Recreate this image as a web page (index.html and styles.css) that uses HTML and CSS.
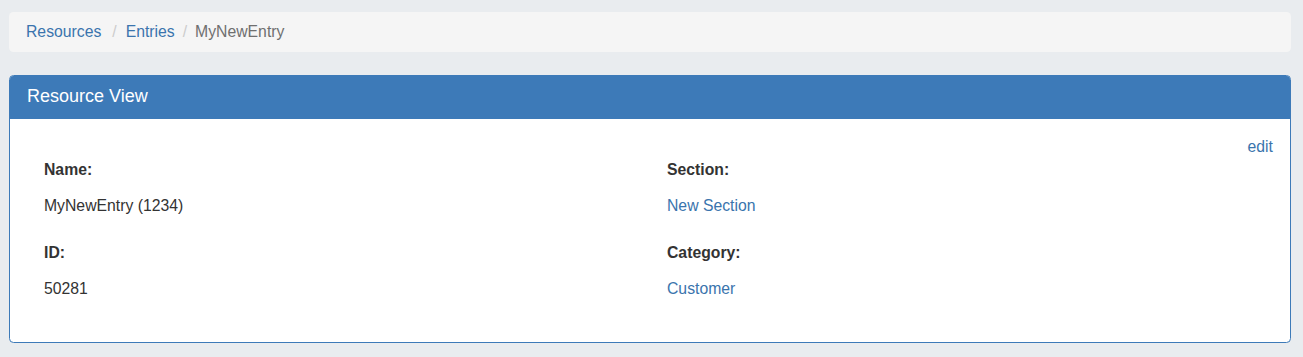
FILE: index.html
```html
<!DOCTYPE html>
<html>
<head>
<meta charset="utf-8">
<link rel="stylesheet" href="styles.css">
</head>
<body>
<div class="page">
  <ol class="breadcrumb">
    <li><a href="#">Resources</a></li>
    <li class="sep">/</li>
    <li><a href="#">Entries</a></li>
    <li class="sep sep-tight">/</li>
    <li class="active">MyNewEntry</li>
  </ol>
  <div class="panel">
    <div class="panel-heading">Resource View</div>
    <div class="panel-body">
      <div class="edit-row"><a href="#">edit</a></div>
      <div class="grid">
        <div class="col">
          <div class="field">
            <div class="label">Name:</div>
            <div class="value">MyNewEntry (1234)</div>
          </div>
          <div class="field">
            <div class="label">ID:</div>
            <div class="value">50281</div>
          </div>
        </div>
        <div class="col">
          <div class="field">
            <div class="label">Section:</div>
            <div class="value"><a href="#">New Section</a></div>
          </div>
          <div class="field">
            <div class="label">Category:</div>
            <div class="value"><a href="#">Customer</a></div>
          </div>
        </div>
      </div>
    </div>
  </div>
</div>
</body>
</html>
```
FILE: styles.css
```css
html, body {
  margin: 0;
  padding: 0;
  background: #e9ecef;
}
body {
  font-family: "Liberation Sans", Arial, sans-serif;
  font-size: 15.75px;
  line-height: 22.5px;
  color: #333;
}
a {
  color: #3a74ad;
  text-decoration: none;
}
.page {
  padding: 12px 12px 0 9px;
}
.breadcrumb {
  list-style: none;
  margin: 0 0 23px 0;
  padding: 8.5px 17px;
  background: #f5f5f5;
  border-radius: 4.5px;
  display: flex;
}
.breadcrumb .sep {
  color: #ccc;
  padding: 0 9px 0 11px;
}
.breadcrumb .sep-tight {
  padding: 0 8px 0 8px;
}
.breadcrumb .active {
  color: #6f6f6f;
}
.panel {
  background: #fff;
  border: 1px solid #3d7ab8;
  border-radius: 4.5px;
  overflow: hidden;
}
.panel-heading {
  background: #3d7ab8;
  color: #fff;
  font-size: 18px;
  line-height: 20px;
  padding: 10px 17px 13px;
}
.panel-body {
  padding: 17px 17px 17px;
  line-height: 22px;
}
.edit-row {
  display: flex;
  justify-content: flex-end;
  margin-bottom: 1px;
}
.grid {
  display: grid;
  grid-template-columns: 1fr 1fr;
}
.col {
  padding: 0 17px;
}
.field {
  margin-bottom: 25px;
}
.label {
  font-weight: bold;
  margin-bottom: 14px;
}
```
